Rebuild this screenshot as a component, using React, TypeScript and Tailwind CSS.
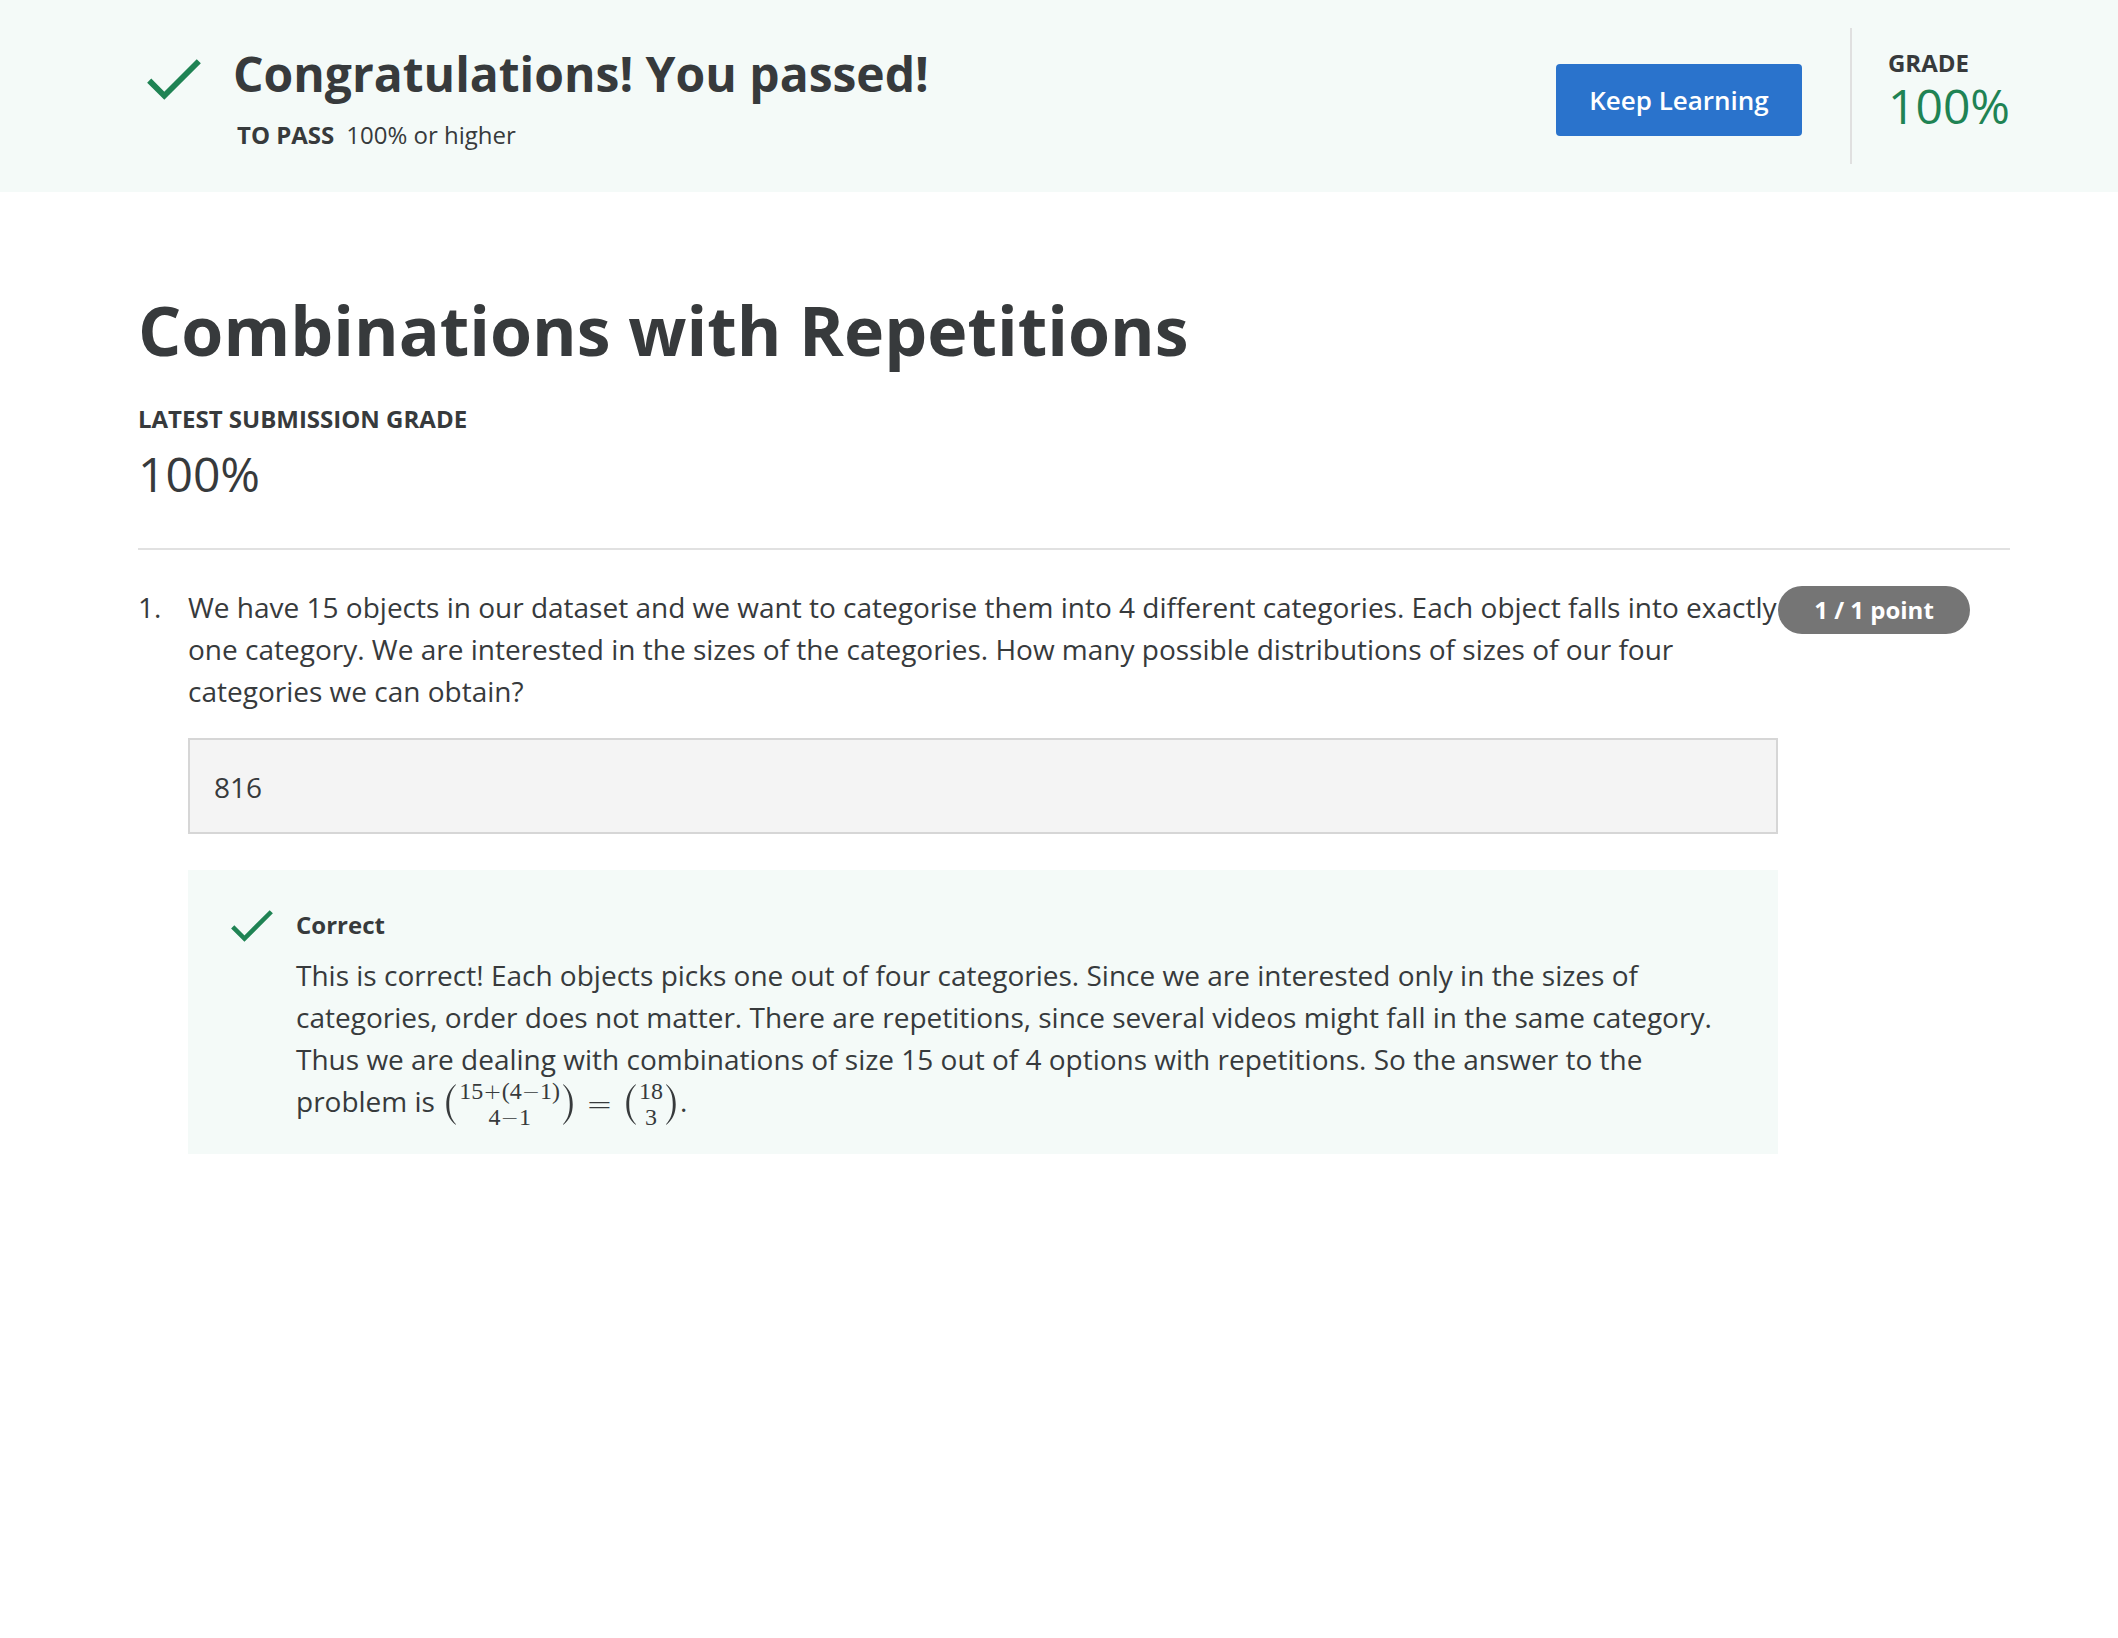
import type { ReactNode } from "react";

function CheckMark({ className }: { className: string }) {
  return (
    <svg viewBox="0 0 54 41" className={className} fill="none" aria-hidden="true">
      <path d="M2.2 21.6 L17.3 36.7 L51.8 2.2" stroke="#1f8354" strokeWidth="5.8" />
    </svg>
  );
}

function Paren({ flip = false }: { flip?: boolean }) {
  return (
    <svg viewBox="0 0 10 41" className={flip ? "h-[41px] w-[10px] -scale-x-100" : "h-[41px] w-[10px]"} aria-hidden="true">
      <path d="M9.6 0.2 C3 5.5 0.3 12 0.3 20.5 C0.3 29 3 35.5 9.6 40.8 L10 40.2 C5 35 3.2 29 3.2 20.5 C3.2 12 5 6 10 0.8 Z" fill="#373a3c" />
    </svg>
  );
}

function Op({ children }: { children: ReactNode }) {
  return <span className="font-['DejaVu_Sans'] text-[22px] font-extralight">{children}</span>;
}

function Binomial({ top, bottom }: { top: ReactNode; bottom: ReactNode }) {
  return (
    <span className="inline-flex items-center gap-[3px]">
      <Paren />
      <span className="flex flex-col items-center text-[24px] leading-[26px]">
        <span className="block h-[26px] whitespace-nowrap">{top}</span>
        <span className="block h-[26px] whitespace-nowrap">{bottom}</span>
      </span>
      <Paren flip />
    </span>
  );
}

function Header() {
  return (
    <header className="flex bg-[#f4faf8] py-7 pr-[108px] pl-[138px]">
      <CheckMark className="mt-[31px] ml-[9px] h-[41px] w-[54px] shrink-0" />
      <div className="ml-8 flex-1 pt-[14px]">
        <h2 className="text-[48px] leading-[64px] font-bold">Congratulations! You passed!</h2>
        <p className="mt-[11px] ml-1 text-[24px] leading-[36px]">
          <strong className="mr-3 font-bold">TO PASS</strong>
          100% or higher
        </p>
      </div>
      <button type="button" className="mt-9 mr-12 h-[72px] w-[246px] shrink-0 rounded-[4px] bg-[#2a73cc] text-[26px] font-semibold text-white">
        Keep Learning
      </button>
      <div className="min-h-[136px] shrink-0 border-l-2 border-[#e0e0e0] pt-[17px] pl-9">
        <p className="text-[24px] leading-[36px] font-bold">GRADE</p>
        <p className="text-[48px] leading-[50px] text-[#1f8354]">100%</p>
      </div>
    </header>
  );
}

export default function App() {
  return (
    <div className="min-h-screen bg-white font-['Open_Sans',sans-serif] text-[#373a3c]">
      <Header />
      <main className="pt-24 pr-[108px] pl-[138px]">
        <h1 className="text-[68px] leading-[84px] font-bold">Combinations with Repetitions</h1>
        <p className="mt-[29px] text-[24px] leading-[36px] font-bold">LATEST SUBMISSION GRADE</p>
        <p className="mt-[13px] text-[48px] leading-[48px]">100%</p>
        <hr className="mt-[50px] border-t-2 border-[#e1e1e1]" />
        <section className="mt-9 flex items-start text-[28px] leading-[42px]">
          <span className="w-[50px] shrink-0">1.</span>
          <div className="min-w-0 flex-1">
            <label htmlFor="answer" className="block">
              We have 15 objects in our dataset and we want to categorise them into 4 different categories. Each object falls into exactly one category. We are interested in the sizes of the categories. How many possible distributions of sizes of our four categories we can obtain?
            </label>
            <input
              id="answer"
              type="text"
              readOnly
              defaultValue="816"
              className="mt-[26px] block h-24 w-full border-2 border-[#d6d6d6] bg-[#f4f4f4] px-6 pt-[2px] text-[28px] outline-none"
            />
            <div className="mt-9 flex bg-[#f4faf8] pt-9 pr-12 pb-8 pl-[43px]">
              <CheckMark className="mt-1 h-8 w-[42px] shrink-0" />
              <div className="ml-[23px] flex-1">
                <h3 className="text-[24px] leading-[38px] font-bold">Correct</h3>
                <p className="mt-[10px]">
                  This is correct! Each objects picks one out of four categories. Since we are interested only in the sizes of categories, order does not matter. There are repetitions, since several videos might fall in the same category. Thus we are dealing with combinations of size 15 out of 4 options with repetitions. So the answer to the problem is{" "}
                  <span className="mt-[6px] mr-1 ml-1 inline-flex h-9 items-center align-top font-['Liberation_Serif',serif]">
                    <Binomial top={<>15<Op>+</Op>(4<Op>−</Op>1)</>} bottom={<>4<Op>−</Op>1</>} />
                    <span className="mx-[13px] font-['DejaVu_Sans'] text-[32px] font-extralight">=</span>
                    <Binomial top="18" bottom="3" />
                  </span>
                  .
                </p>
              </div>
            </div>
          </div>
          <span className="mr-10 h-12 w-48 shrink-0 rounded-full bg-[#757575] text-center text-[24px] leading-[48px] font-bold text-white">
            1 / 1 point
          </span>
        </section>
      </main>
    </div>
  );
}
